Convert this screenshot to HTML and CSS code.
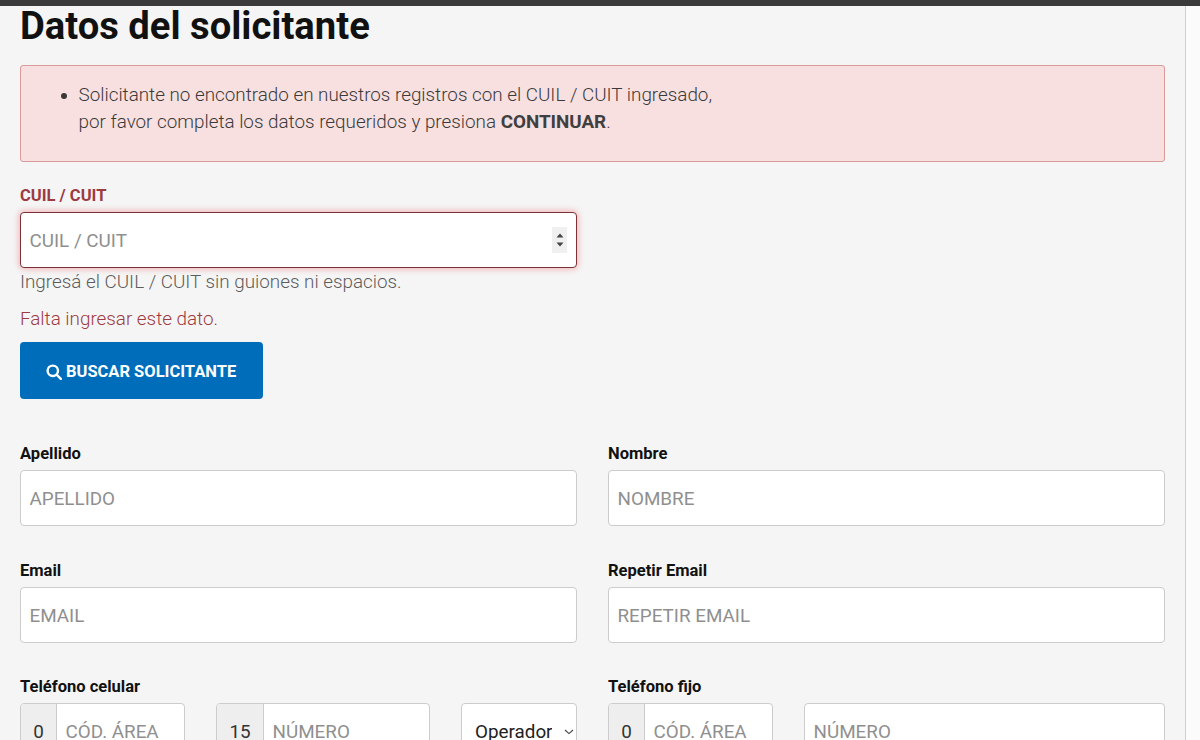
FILE: index.html
```html
<!DOCTYPE html>
<html lang="es">
<head>
<meta charset="utf-8">
<title>Datos del solicitante</title>
<link rel="stylesheet" href="styles.css">
</head>
<body>
<div class="topbar"></div>
<main class="page">
  <h1 class="title">Datos del solicitante</h1>
  <div class="alert">
    <ul class="alert-list">
      <li>Solicitante no encontrado en nuestros registros con el CUIL / CUIT ingresado,<br>por favor completa los datos requeridos y presiona <strong>CONTINUAR</strong>.</li>
    </ul>
  </div>
  <section class="cuil">
    <label class="label label-error" for="cuil">CUIL / CUIT</label>
    <div class="cuil-row">
      <div class="field field-error">
        <input class="input" id="cuil" placeholder="CUIL / CUIT">
        <span class="spinner">
          <svg width="8" height="5" viewBox="0 0 8 5"><path d="M4 .5 7.5 4.5H.5z" fill="#444"/></svg>
          <svg width="8" height="5" viewBox="0 0 8 5"><path d="M4 4.5 .5.5h7z" fill="#444"/></svg>
        </span>
      </div>
    </div>
    <p class="hint">Ingresá el CUIL / CUIT sin guiones ni espacios.</p>
    <p class="error">Falta ingresar este dato.</p>
    <button class="btn" type="button">
      <svg class="btn-icon" width="16" height="16" viewBox="0 0 16 16" fill="none" stroke="#fff" stroke-width="2.4"><circle cx="6.8" cy="6.8" r="5.2"/><path d="m10.6 10.6 4.2 4.2" stroke-linecap="round"/></svg>
      BUSCAR SOLICITANTE
    </button>
  </section>
  <section class="form-grid">
    <div class="group">
      <label class="label" for="apellido">Apellido</label>
      <div class="field"><input class="input" id="apellido" placeholder="APELLIDO"></div>
    </div>
    <div class="group">
      <label class="label" for="nombre">Nombre</label>
      <div class="field"><input class="input" id="nombre" placeholder="NOMBRE"></div>
    </div>
    <div class="group">
      <label class="label" for="email">Email</label>
      <div class="field"><input class="input" id="email" placeholder="EMAIL"></div>
    </div>
    <div class="group">
      <label class="label" for="email2">Repetir Email</label>
      <div class="field"><input class="input" id="email2" placeholder="REPETIR EMAIL"></div>
    </div>
    <div class="group">
      <label class="label" for="area">Teléfono celular</label>
      <div class="phone phone-cell">
        <div class="field"><span class="addon addon-0">0</span><input class="input input-small" id="area" placeholder="CÓD. ÁREA"></div>
        <div class="field"><span class="addon addon-15">15</span><input class="input input-small" placeholder="NÚMERO"></div>
        <div class="field select-field"><span class="select-text">Operador</span>
          <svg class="chevron" width="10" height="6" viewBox="0 0 10 6" fill="none" stroke="#444" stroke-width="1.1"><path d="m1 1 4 3.6L9 1"/></svg>
        </div>
      </div>
    </div>
    <div class="group">
      <label class="label" for="area2">Teléfono fijo</label>
      <div class="phone phone-land">
        <div class="field"><span class="addon addon-0">0</span><input class="input input-small" id="area2" placeholder="CÓD. ÁREA"></div>
        <div class="field"><input class="input" placeholder="NÚMERO"></div>
      </div>
    </div>
  </section>
</main>
</body>
</html>
```
FILE: styles.css
```css
* { box-sizing: border-box; }
html, body { margin: 0; height: 740px; overflow: hidden; }
body { background: #fbfbfb; font-family: Roboto, "Liberation Sans", sans-serif; color: #111; }
.topbar { position: relative; z-index: 1; height: 6px; background: #3b3b3b; }
.page {
  width: 1186px; min-height: 734px;
  background: #f5f5f5; border-right: 1px solid #cfcfcf;
  padding: 0 20px;
}
.title { margin: 0; font-size: 38.2px; line-height: 40px; font-weight: 700; color: #111; }
.alert {
  margin-top: 19px; height: 97px; width: 1145px;
  background: #f8e0e0; border: 1px solid #d99a9a; border-radius: 3px;
  padding: 16px 0 0 57.5px; font-size: 18.83px; line-height: 27px; font-weight: 300; color: #3a3a3a;
}
.alert strong { font-weight: 700; color: #3f3f3f; letter-spacing: -0.02px; }
.alert-list { margin: 0; padding: 0; }
.cuil { margin-top: 23px; }
.label { display: block; padding-top: 1px; font-size: 16.55px; line-height: 20px; font-weight: 700; color: #111; margin-bottom: 6px; }
.label-error { color: #9c3b42; }
.field {
  display: flex; align-items: center; height: 56px; background: #fff;
  border: 1px solid #ccc; border-radius: 4px; overflow: hidden;
}
.cuil-row { width: 557px; }
.field-error { border-color: #7d3238; box-shadow: 0 0 6px 1px #eeb0b3; overflow: visible; }
.input {
  flex: 1; min-width: 0; height: 100%; border: 0; outline: 0; padding: 2px 8.5px 0; background: transparent;
  font: 400 18.83px Roboto, sans-serif; color: #333;
}
.input::placeholder { color: #8f8f8f; opacity: 1; }
.spinner {
  width: 15px; height: 26px; margin-right: 9px; background: #f0f0f0;
  display: flex; flex-direction: column; align-items: center; justify-content: center; gap: 4px;
}
.hint { margin: 3px 0 0; font-size: 18.83px; line-height: 22px; font-weight: 300; color: #5c5c5c; }
.error { margin: 15px 0 0; font-size: 18.83px; line-height: 22px; font-weight: 300; color: #9c3b42; }
.btn {
  display: flex; align-items: center; gap: 4px; margin-top: 12px; width: 243px; height: 57px;
  padding: 2px 0 0 26px; background: #006dbb; color: #fff; border: 0; border-radius: 4px;
  font: 700 16.5px Roboto, sans-serif;
}
.form-grid { margin-top: 44px; display: grid; grid-template-columns: 557px 557px; column-gap: 31px; row-gap: 33.5px; }
.phone { display: flex; }
.phone-cell { gap: 31px; }
.phone-cell .field:nth-child(1) { width: 165px; }
.phone-cell .field:nth-child(2) { width: 214px; }
.phone-cell .field:nth-child(3) { width: 116px; }
.phone-land { gap: 31px; }
.phone-land .field:nth-child(1) { width: 165px; }
.phone-land .field:nth-child(2) { flex: 1; }
.addon {
  display: flex; align-items: center; justify-content: center; height: 100%; padding-top: 2px; background: #eee;
  border-right: 1px solid #ccc; font-size: 18.83px; color: #333;
}
.addon-0 { width: 36px; }
.addon-15 { width: 47px; }
.select-field { padding: 2px 0 0 13px; }
.select-text { width: 77px; overflow: hidden; font-size: 18.83px; color: #222; white-space: nowrap; }
.chevron { margin-left: 12px; }
```
